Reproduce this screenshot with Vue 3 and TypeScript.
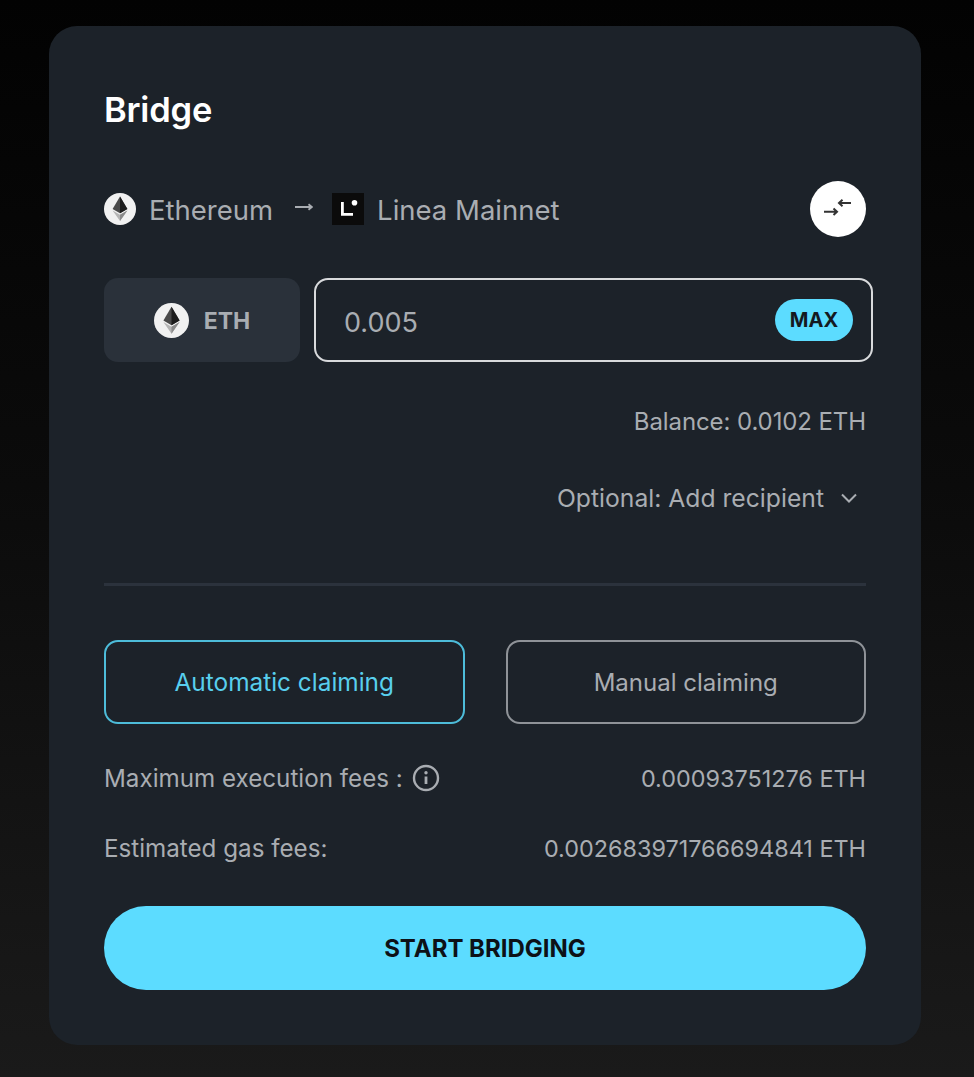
<script setup lang="ts">
const fees = [
  { label: 'Maximum execution fees :', value: '0.00093751276 ETH', info: true },
  { label: 'Estimated gas fees:', value: '0.002683971766694841 ETH', info: false },
]
</script>

<template>
  <main class="page">
    <section class="card">
      <h1 class="title">Bridge</h1>

      <div class="route">
        <svg class="eth-icon" viewBox="0 0 32 32" aria-hidden="true">
          <circle cx="16" cy="16" r="16" fill="#f1f1f1" />
          <path d="M16 3.5 8.6 16 16 20.3 23.4 16Z" fill="#4a4a4a" />
          <path d="M16 3.5V20.3L23.4 16Z" fill="#1c1c1c" />
          <path d="M8.6 17.4 16 28 23.4 17.4 16 21.8Z" fill="#b5b5b5" />
          <path d="M16 21.8V28L23.4 17.4Z" fill="#8a8a8a" />
        </svg>
        <span class="chain">Ethereum</span>
        <svg class="arrow" viewBox="0 0 18 10" aria-hidden="true">
          <path d="M0 5H17M13.5 2.2 17 5 13.5 7.8" fill="none" stroke="#a9adb2" stroke-width="1.8" />
        </svg>
        <svg class="linea" viewBox="0 0 32 32" aria-hidden="true">
          <rect width="32" height="32" fill="#0b0b0b" />
          <path d="M9 9H11.8V20H21V22.8H9Z" fill="#fff" />
          <circle cx="22.5" cy="9.8" r="2.8" fill="#fff" />
        </svg>
        <span class="chain">Linea Mainnet</span>
        <button class="swap" type="button" aria-label="Swap">
          <svg viewBox="0 0 32 32" width="32" height="32" aria-hidden="true">
            <path d="M2 18.7H15M11.5 15.5 15 18.7 11.5 22" fill="none" stroke="#333" stroke-width="2" />
            <path d="M29 10H17M20.5 6.8 17 10 20.5 13.2" fill="none" stroke="#333" stroke-width="2" />
          </svg>
        </button>
      </div>

      <div class="amount-row">
        <div class="token">
          <svg class="eth-icon token-icon" viewBox="0 0 32 32" aria-hidden="true">
            <circle cx="16" cy="16" r="16" fill="#f1f1f1" />
            <path d="M16 3.5 8.6 16 16 20.3 23.4 16Z" fill="#4a4a4a" />
            <path d="M16 3.5V20.3L23.4 16Z" fill="#1c1c1c" />
            <path d="M8.6 17.4 16 28 23.4 17.4 16 21.8Z" fill="#b5b5b5" />
            <path d="M16 21.8V28L23.4 17.4Z" fill="#8a8a8a" />
          </svg>
          <span class="token-name">ETH</span>
        </div>
        <div class="amount">
          <span class="amount-value">0.005</span>
          <span class="max">MAX</span>
        </div>
      </div>

      <p class="balance">Balance: 0.0102 ETH</p>

      <div class="recipient">
        <span>Optional: Add recipient</span>
        <svg viewBox="0 0 18 12" width="18" height="12" aria-hidden="true">
          <path d="M2 2.5 9 9.5 16 2.5" fill="none" stroke="#a9adb2" stroke-width="2" />
        </svg>
      </div>

      <hr class="divider" />

      <div class="claims">
        <div class="claim active">Automatic claiming</div>
        <div class="claim">Manual claiming</div>
      </div>

      <div class="fees">
        <div v-for="fee in fees" :key="fee.label" class="fee">
          <span class="fee-label">
            {{ fee.label }}
            <svg v-if="fee.info" viewBox="0 0 28 28" width="28" height="28" aria-hidden="true">
              <circle cx="14" cy="14" r="12" fill="none" stroke="#a9adb2" stroke-width="2.4" />
              <circle cx="14" cy="8.8" r="1.7" fill="#a9adb2" />
              <path d="M14 12.5V20" stroke="#a9adb2" stroke-width="2.8" />
            </svg>
          </span>
          <span class="fee-value">{{ fee.value }}</span>
        </div>
      </div>

      <button class="start" type="button">START BRIDGING</button>
    </section>
  </main>
</template>

<style>
html,
body {
  margin: 0;
  background: #000;
}
</style>

<style scoped>
.page {
  box-sizing: border-box;
  width: 974px;
  height: 1077px;
  padding: 26px 53px 32px 49px;
  background: linear-gradient(180deg, #020202 0%, #0b0b0b 45%, #1a1a1a 100%);
  font-family: Inter, "Liberation Sans", sans-serif;
  color: #a9adb2;
}

.card {
  box-sizing: border-box;
  height: 1019px;
  padding: 62px 55px 0;
  border-radius: 28px;
  background: #1c2229;
}

.title {
  margin: 0;
  color: #fff;
  font-size: 34.5px;
  font-weight: 600;
  line-height: 44px;
  letter-spacing: -0.2px;
}

.route {
  display: flex;
  align-items: center;
  height: 56px;
  margin-top: 49px;
}

.eth-icon {
  width: 32px;
  height: 32px;
  flex: none;
}

.chain {
  margin-left: 13px;
  padding-top: 2px;
  font-size: 27.5px;
  line-height: 32px;
}

.arrow {
  width: 18px;
  height: 10px;
  margin: -4px 19px 0 22px;
}

.linea {
  width: 32px;
  height: 32px;
}

.swap {
  display: flex;
  align-items: center;
  justify-content: center;
  width: 56px;
  height: 56px;
  margin-left: auto;
  padding: 0;
  border: 0;
  border-radius: 50%;
  background: #fff;
}

.amount-row {
  display: flex;
  gap: 14px;
  height: 84px;
  margin: 41px -7px 0 0;
}

.token {
  display: flex;
  flex: none;
  align-items: center;
  justify-content: center;
  gap: 15px;
  width: 196px;
  border-radius: 14px;
  background: #2a313a;
  font-size: 23px;
  font-weight: 700;
}

.token-name {
  padding-top: 2px;
}

.token-icon {
  width: 35px;
  height: 35px;
}

.amount {
  display: flex;
  flex: 1;
  align-items: center;
  justify-content: space-between;
  box-sizing: border-box;
  padding: 0 18px 0 28px;
  border: 2px solid #d8dadc;
  border-radius: 14px;
}

.amount-value {
  padding-top: 4px;
  font-size: 27px;
}

.max {
  display: flex;
  align-items: center;
  justify-content: center;
  width: 78px;
  height: 42px;
  border-radius: 21px;
  background: #5cdcff;
  color: #14191f;
  font-size: 20px;
  font-weight: 700;
}

.balance {
  margin: 43px 0 0;
  font-size: 24px;
  line-height: 34px;
  letter-spacing: -0.1px;
  text-align: right;
}

.recipient {
  display: flex;
  align-items: center;
  justify-content: flex-end;
  gap: 16px;
  margin-top: 42px;
  padding-right: 8px;
  font-size: 24.7px;
  line-height: 34px;
}

.divider {
  height: 3px;
  margin: 68px 0 0;
  border: 0;
  background: #2b323c;
}

.claims {
  display: grid;
  grid-template-columns: 1fr 1fr;
  gap: 41px;
  margin-top: 54px;
}

.claim {
  display: flex;
  align-items: center;
  justify-content: center;
  box-sizing: border-box;
  height: 84px;
  border: 2px solid #8f9398;
  border-radius: 14px;
  font-size: 24px;
}

.claim.active {
  border-color: #4dbcd9;
  color: #58cfee;
  font-size: 24.4px;
}

.fees {
  display: flex;
  flex-direction: column;
  gap: 36px;
  margin-top: 37px;
}

.fee {
  display: flex;
  align-items: center;
  justify-content: space-between;
  height: 34px;
  font-size: 24.2px;
}

.fee-label {
  display: flex;
  align-items: center;
  gap: 9px;
}

.fee-value {
  font-size: 23.4px;
}

.start {
  display: block;
  width: 100%;
  height: 84px;
  margin-top: 41px;
  border: 0;
  border-radius: 42px;
  background: #5cdcff;
  color: #0d1117;
  font-family: inherit;
  font-size: 24px;
  font-weight: 700;
}
</style>
